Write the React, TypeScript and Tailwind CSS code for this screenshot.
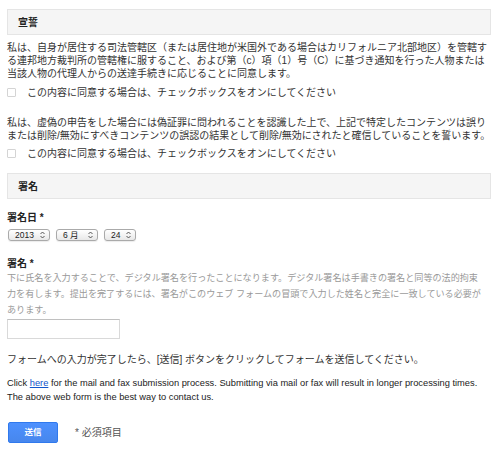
import React from "react";

const p1 = [
  "私は、自身が居住する司法管轄区（または居住地が米国外である場合はカリフォルニア北部地区）を管轄す",
  "る連邦地方裁判所の管轄権に服すること、および第（c）項（1）号（C）に基づき通知を行った人物または",
  "当該人物の代理人からの送達手続きに応じることに同意します。",
];

const p2 = [
  "私は、虚偽の申告をした場合には偽証罪に問われることを認識した上で、上記で特定したコンテンツは誤り",
  "または削除/無効にすべきコンテンツの誤認の結果として削除/無効にされたと確信していることを誓います。",
];

const desc = [
  "下に氏名を入力することで、デジタル署名を行ったことになります。デジタル署名は手書きの署名と同等の法的拘束",
  "力を有します。提出を完了するには、署名がこのウェブ フォームの冒頭で入力した姓名と完全に一致している必要が",
  "あります。",
];

function SectionHeader({ title }: { title: string }) {
  return (
    <div className="flex h-[26px] w-[484px] items-center border border-[#e5e5e5] bg-[#f5f5f5] pl-[10px] text-[10px] font-bold text-[#222]">
      {title}
    </div>
  );
}

function Lines({ lines, className }: { lines: string[]; className?: string }) {
  return (
    <div className={className}>
      {lines.map((l) => (
        <div key={l} className="whitespace-nowrap">
          {l}
        </div>
      ))}
    </div>
  );
}

function Agree() {
  return (
    <label className="flex h-[13px] items-center whitespace-nowrap">
      <span className="h-[9px] w-[9px] shrink-0 rounded-[1px] border border-[#d4d4d4] bg-white" />
      <span className="ml-[11px]">この内容に同意する場合は、チェックボックスをオンにしてください</span>
    </label>
  );
}

function FakeSelect({ value, width }: { value: string; width: string }) {
  return (
    <div
      className={`flex h-[12px] ${width} items-center justify-between rounded-[3px] border border-[#aaa] bg-gradient-to-b from-white to-[#e8e8e8] pl-[6px] pr-[4px] text-[8.5px] leading-none text-[#222] shadow-[0_1px_1px_rgba(0,0,0,0.08)]`}
    >
      <span>{value}</span>
      <svg width="5" height="8" viewBox="0 0 5 8" className="text-[#444]">
        <path d="M0.5 3 L2.5 1 L4.5 3" fill="none" stroke="currentColor" strokeWidth="0.9" />
        <path d="M0.5 5 L2.5 7 L4.5 5" fill="none" stroke="currentColor" strokeWidth="0.9" />
      </svg>
    </div>
  );
}

export default function App() {
  return (
    <div
      className="h-[451px] w-[500px] overflow-hidden bg-white px-[7px] pt-[9px] text-[10px] leading-[13px] text-[#333]"
      style={{ fontFamily: '"Liberation Sans", "Noto Sans CJK JP", sans-serif' }}
    >
      <SectionHeader title="宣誓" />

      <Lines lines={p1} className="mt-[6px]" />
      <div className="mt-[6px]">
        <Agree />
      </div>

      <Lines lines={p2} className="mt-[17px]" />
      <div className="mt-[5px]">
        <Agree />
      </div>

      <div className="mt-[13px]">
        <SectionHeader title="署名" />
      </div>

      <div className="mt-[12px] font-bold text-[#222]">署名日 *</div>
      <div className="mt-[5px] flex items-center gap-[6px] pl-[1px]">
        <FakeSelect value="2013" width="w-[42px]" />
        <FakeSelect value="6 月" width="w-[42px]" />
        <FakeSelect value="24" width="w-[32px]" />
      </div>

      <div className="mt-[16px] font-bold text-[#222]">署名 *</div>
      <Lines lines={desc} className="text-[9.1px] leading-[16px] text-[#999]" />

      <div className="mt-[1px] h-[20px] w-[113px] border border-[#d9d9d9] border-t-[#c0c0c0] bg-white" />

      <div className="mt-[14px]">
        フォームへの入力が完了したら、[送信] ボタンをクリックしてフォームを送信してください。
      </div>

      <div className="mt-[10px] text-[9.3px] leading-[14px] text-[#222]">
        <div>
          Click{" "}
          <a href="#" className="text-[#15c] underline">
            here
          </a>{" "}
          for the mail and fax submission process. Submitting via mail or fax will result in longer processing times.
        </div>
        <div>The above web form is the best way to contact us.</div>
      </div>

      <div className="mt-[18px] flex items-center">
        <button className="ml-[1px] flex h-[21px] w-[50px] items-center justify-center rounded-[2px] border border-[#3079ed] bg-gradient-to-b from-[#4d90fe] to-[#4787ed] text-[8.5px] font-bold text-white">
          送信
        </button>
        <span className="ml-[17px] text-[#555]">* 必須項目</span>
      </div>
    </div>
  );
}
